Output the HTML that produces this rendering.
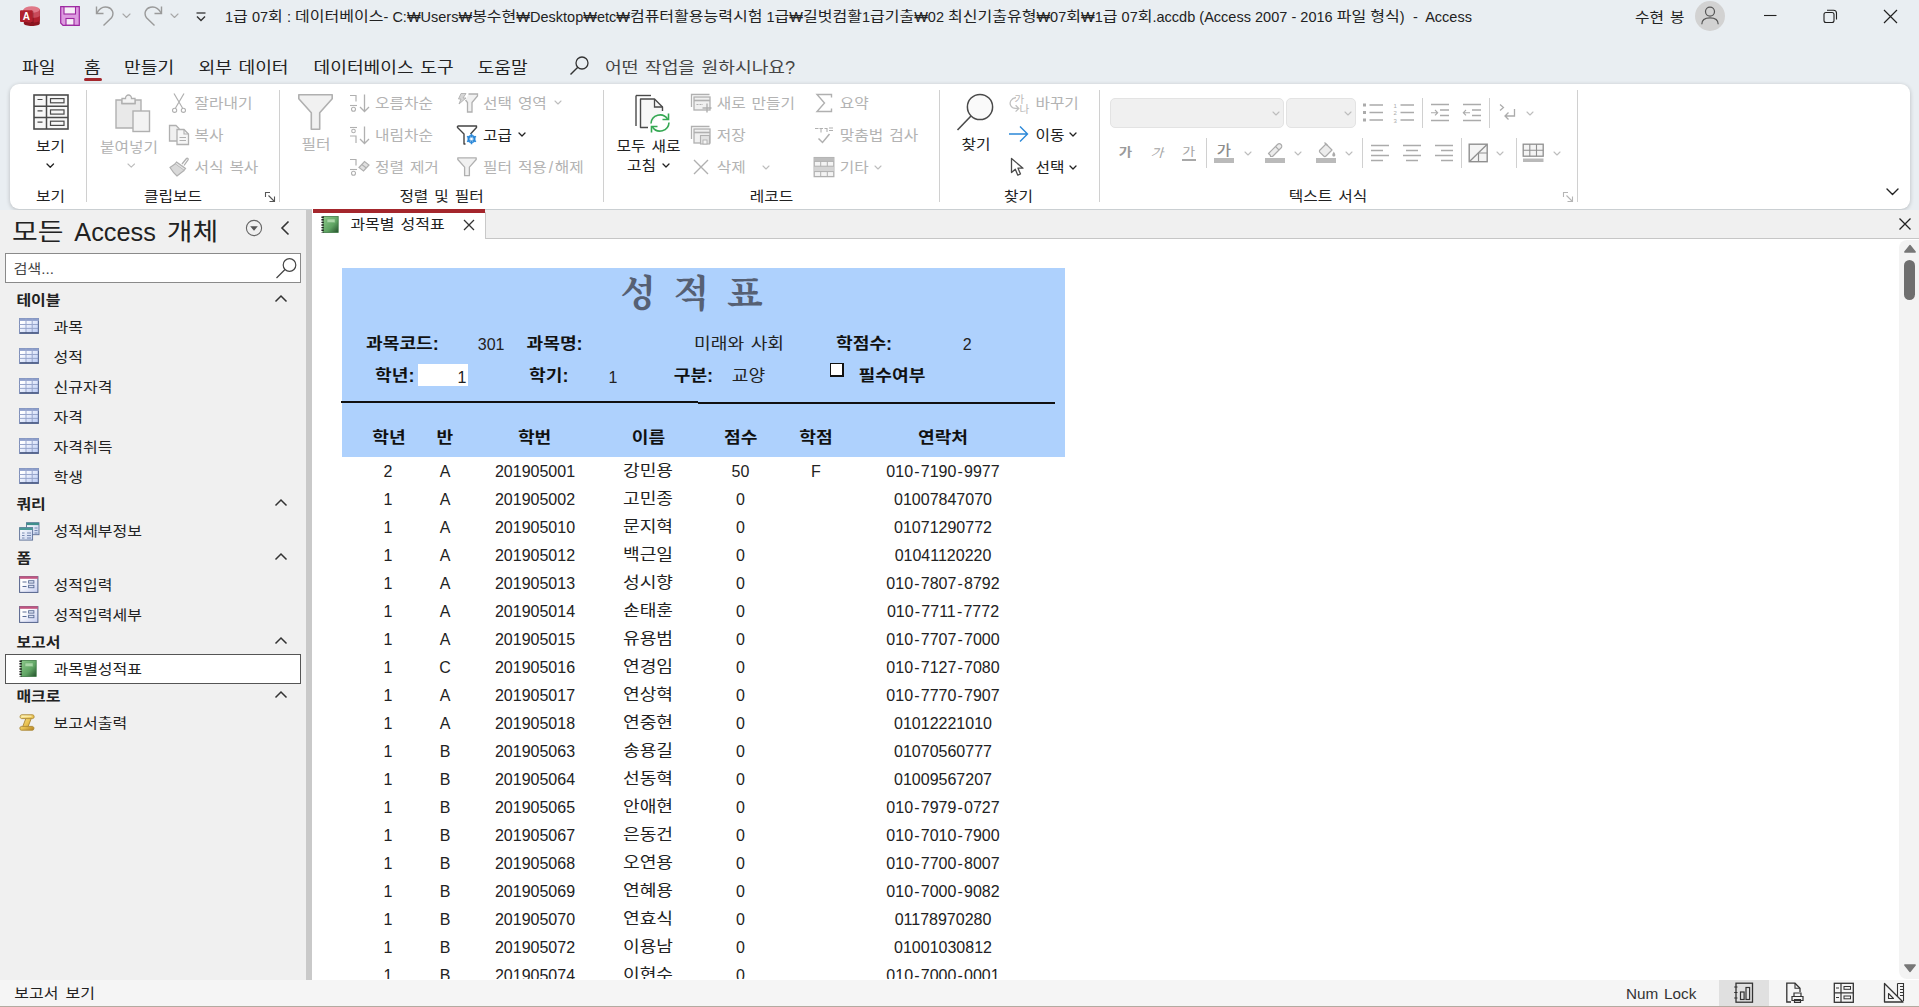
<!DOCTYPE html>
<html lang="ko"><head><meta charset="utf-8"><title>Access</title>
<style>
html,body{margin:0;padding:0}
body{width:1919px;height:1007px;overflow:hidden;position:relative;background:#f0f0f0;font-family:"Liberation Sans","Noto Sans CJK KR",sans-serif;}
.t{position:absolute;white-space:nowrap;word-spacing:1.5px;}
.k{display:inline-block;transform:scaleY(.85);transform-origin:50% 50%;}
div{box-sizing:border-box}
</style></head><body>
<div style="position:absolute;left:0;top:0;width:1919px;height:210px;background:#e9eef2"></div>
<svg style="position:absolute;left:20px;top:5px;" width="21" height="22" viewBox="0 0 21 22" fill="none">
<path d="M3.8 4.5 V18.5 C3.8 19.9 7.4 21 11.8 21 C16.2 21 19.8 19.9 19.8 18.5 V4.5 Z" fill="#8c1520"/>
<path d="M3.8 4.5 V15.2 C3.8 16.6 7.4 17.6 11.8 17.6 C16.2 17.6 19.8 16.6 19.8 15.2 V4.5 Z" fill="#b0202e"/>
<path d="M3.8 4.5 V10.4 C3.8 11.8 7.4 12.8 11.8 12.8 C16.2 12.8 19.8 11.8 19.8 10.4 V4.5 Z" fill="#c94a5a"/>
<ellipse cx="11.8" cy="4.5" rx="8" ry="3.3" fill="#e07888"/>
<rect x="11" y="6.3" width="2.6" height="11.6" fill="#000" opacity="0.22"/>
<rect x="0" y="5.2" width="12.7" height="11.8" rx="1" fill="#b0202e"/>
<text x="6.3" y="14.6" font-family="Liberation Sans, sans-serif" font-weight="bold" font-size="10" fill="#fff" text-anchor="middle">A</text>
</svg>
<svg style="position:absolute;left:60px;top:6px;" width="20" height="20" viewBox="0 0 20 20" fill="none">
<path d="M0.7 0.7 H19.3 V19.3 H3 L0.7 17 Z" fill="#dd9ae0" stroke="#9c27a0" stroke-width="1.2"/>
<rect x="4" y="0.8" width="11.5" height="7.2" fill="#f6eef7" stroke="#9c27a0" stroke-width="1.1"/>
<rect x="6" y="12.5" width="8" height="6.6" fill="#f6eef7" stroke="#9c27a0" stroke-width="1.1"/>
</svg>
<svg style="position:absolute;left:94px;top:5px;" width="22" height="22" viewBox="0 0 22 22" fill="none"><path d="M2.5 1.5 V8.5 H9.5" stroke="#9a9a9a" stroke-width="1.4"/><path d="M2.8 8.2 C5 4 9 1.2 13.5 2.2 C18.5 3.3 20.5 8.5 17.5 12.8 L9.5 20.5" stroke="#9a9a9a" stroke-width="1.4"/></svg>
<svg style="position:absolute;left:122.0px;top:12.75px;" width="9" height="5.5" viewBox="0 0 9 5.5" fill="none"><path d="M1 1 L4.5 4.5 L8 1" stroke="#a8a8a8" stroke-width="1.1" stroke-linecap="round" stroke-linejoin="round"/></svg>
<svg style="position:absolute;left:142px;top:5px;" width="22" height="22" viewBox="0 0 22 22" fill="none"><path d="M19.5 1.5 V8.5 H12.5" stroke="#9a9a9a" stroke-width="1.4"/><path d="M19.2 8.2 C17 4 13 1.2 8.5 2.2 C3.5 3.3 1.5 8.5 4.5 12.8 L12.5 20.5" stroke="#9a9a9a" stroke-width="1.4"/></svg>
<svg style="position:absolute;left:170.0px;top:12.75px;" width="9" height="5.5" viewBox="0 0 9 5.5" fill="none"><path d="M1 1 L4.5 4.5 L8 1" stroke="#a8a8a8" stroke-width="1.1" stroke-linecap="round" stroke-linejoin="round"/></svg>
<svg style="position:absolute;left:195px;top:11px;" width="12" height="12" viewBox="0 0 12 12" fill="none"><path d="M1.5 2 H10.5" stroke="#333" stroke-width="1.3"/><path d="M2 5.5 L6 9.5 L10 5.5" stroke="#333" stroke-width="1.4"/></svg>
<div class="t title" style="top:4.70px;font-size:14.5px;line-height:24px;color:#222;left:225.00px;word-spacing:0.1px;">1<span class="k" style="font-size:16px">급</span> 07<span class="k" style="font-size:16px">회</span> : <span class="k" style="font-size:16px">데이터베이스</span>- C:₩Users₩<span class="k" style="font-size:16px">봉수현</span>₩Desktop₩etc₩<span class="k" style="font-size:16px">컴퓨터활용능력시험</span> 1<span class="k" style="font-size:16px">급</span>₩<span class="k" style="font-size:16px">길벗컴활</span>1<span class="k" style="font-size:16px">급기출</span>₩02 <span class="k" style="font-size:16px">최신기출유형</span>₩07<span class="k" style="font-size:16px">회</span>₩1<span class="k" style="font-size:16px">급</span> 07<span class="k" style="font-size:16px">회</span>.accdb (Access 2007 - 2016 <span class="k" style="font-size:16px">파일</span> <span class="k" style="font-size:16px">형식</span>)&nbsp; -&nbsp; Access</div>
<div class="t " style="top:5.70px;font-size:15.75px;line-height:24px;color:#222;left:1635.00px;"><span class="k">수현</span> <span class="k">봉</span></div>
<svg style="position:absolute;left:1695px;top:1px;" width="30" height="30" viewBox="0 0 30 30" fill="none"><circle cx="15" cy="15" r="15" fill="#d2d2d2"/><circle cx="15" cy="10.6" r="4.5" stroke="#555" stroke-width="1.2"/><path d="M6.8 23.3 C6.8 19 10 16.8 15 16.8 C20 16.8 23.2 19 23.2 23.3" stroke="#555" stroke-width="1.2"/></svg>
<svg style="position:absolute;left:1763px;top:10px;" width="14" height="12" viewBox="0 0 14 12" fill="none"><path d="M1 5.5 H13.5" stroke="#222" stroke-width="1.1"/></svg>
<svg style="position:absolute;left:1823px;top:9px;" width="15" height="15" viewBox="0 0 15 15" fill="none"><rect x="1" y="3.5" width="10" height="10" rx="2" stroke="#222" stroke-width="1.1"/><path d="M4 1.3 H10.5 C12.3 1.3 13.5 2.5 13.5 4.3 V10.5" stroke="#222" stroke-width="1.1"/></svg>
<svg style="position:absolute;left:1883px;top:9px;" width="15" height="15" viewBox="0 0 15 15" fill="none"><path d="M1 1 L14 14 M14 1 L1 14" stroke="#222" stroke-width="1.2"/></svg>
<div class="t " style="top:56.20px;font-size:18.15px;line-height:24px;color:#222;left:22.00px;"><span class="k">파일</span></div>
<div class="t " style="top:56.20px;font-size:18.15px;line-height:24px;color:#222;left:84.00px;"><span class="k">홈</span></div>
<div style="position:absolute;left:84px;top:78px;width:18px;height:3px;border-radius:2px;background:#a4262c"></div>
<div class="t " style="top:56.20px;font-size:18.15px;line-height:24px;color:#222;left:124.00px;"><span class="k">만들기</span></div>
<div class="t " style="top:56.20px;font-size:18.15px;line-height:24px;color:#222;left:198.50px;"><span class="k">외부</span> <span class="k">데이터</span></div>
<div class="t " style="top:56.20px;font-size:18.15px;line-height:24px;color:#222;left:313.50px;"><span class="k">데이터베이스</span> <span class="k">도구</span></div>
<div class="t " style="top:56.20px;font-size:18.15px;line-height:24px;color:#222;left:477.50px;"><span class="k">도움말</span></div>
<svg style="position:absolute;left:569px;top:55px;" width="22" height="22" viewBox="0 0 22 22" fill="none"><circle cx="13" cy="8" r="6" stroke="#333" stroke-width="1.3"/><path d="M8.8 12.2 L1.5 19.5" stroke="#333" stroke-width="1.4"/></svg>
<div class="t " style="top:56.20px;font-size:18.15px;line-height:24px;color:#444;left:605.00px;"><span class="k">어떤</span> <span class="k">작업을</span> <span class="k">원하시나요</span>?</div>
<div style="position:absolute;left:10px;top:83.6px;width:1900px;height:125.2px;background:#fff;border-radius:9px;box-shadow:0 1px 4px rgba(0,0,0,.22)"></div>
<svg style="position:absolute;left:33px;top:94px;" width="36" height="36" viewBox="0 0 36 36" fill="none">
<rect x="1" y="1" width="34" height="34" fill="#f7f7f7" stroke="#4a4a4a" stroke-width="1.6"/>
<path d="M1 12.3 H35 M1 23.6 H35 M13.5 1 V35" stroke="#4a4a4a" stroke-width="1.5"/>
<path d="M4.5 5.5 H9.5 M4.5 16.8 H9.5 M4.5 28.1 H9.5" stroke="#4a4a4a" stroke-width="1.2"/>
<rect x="17.5" y="4.6" width="13.5" height="4.2" stroke="#4a4a4a" stroke-width="1.2"/>
<rect x="17.5" y="15.9" width="13.5" height="4.2" stroke="#4a4a4a" stroke-width="1.2"/>
<rect x="17.5" y="27.2" width="13.5" height="4.2" stroke="#4a4a4a" stroke-width="1.2"/>
</svg>
<div class="t " style="top:135.20px;font-size:15.75px;line-height:24px;color:#222;left:-249.50px;width:600px;text-align:center;"><span class="k">보기</span></div>
<svg style="position:absolute;left:46.25px;top:162.9px;" width="8.5" height="5.2" viewBox="0 0 8.5 5.2" fill="none"><path d="M1 1 L4.25 4.2 L7.5 1" stroke="#222" stroke-width="1.3" stroke-linecap="round" stroke-linejoin="round"/></svg>
<div class="t " style="top:185.20px;font-size:15.75px;line-height:24px;color:#222;left:-249.50px;width:600px;text-align:center;"><span class="k">보기</span></div>
<div style="position:absolute;left:86px;top:90px;width:1px;height:112px;background:#d0d0d0"></div>
<svg style="position:absolute;left:114px;top:93px;" width="37" height="40" viewBox="0 0 37 40" fill="none">
<path d="M2 7 H8 V10.5 H21 V7 H27 V35 H2 Z" fill="#e9e9e9" stroke="#b0b0b0" stroke-width="1.4"/>
<path d="M8 7 V5.5 H11.5 C11.5 3.5 13 2 14.5 2 C16 2 17.5 3.5 17.5 5.5 H21 V10.5 H8 Z" fill="#f4f4f4" stroke="#b0b0b0" stroke-width="1.3"/>
<rect x="19" y="18" width="16.5" height="20.5" fill="#f3f3f3" stroke="#b0b0b0" stroke-width="1.4"/>
</svg>
<div class="t " style="top:135.70px;font-size:15.75px;line-height:24px;color:#b3b3b3;left:-171.00px;width:600px;text-align:center;"><span class="k">붙여넣기</span></div>
<svg style="position:absolute;left:126.75px;top:162.9px;" width="8.5" height="5.2" viewBox="0 0 8.5 5.2" fill="none"><path d="M1 1 L4.25 4.2 L7.5 1" stroke="#bdbdbd" stroke-width="1.1" stroke-linecap="round" stroke-linejoin="round"/></svg>
<svg style="position:absolute;left:171px;top:92px;" width="16" height="22" viewBox="0 0 16 22" fill="none"><path d="M3 1.5 L11.5 16 M13 1.5 L4.5 16" stroke="#b0b0b0" stroke-width="1.2"/><circle cx="3.6" cy="18.3" r="2.1" stroke="#b0b0b0" stroke-width="1.1"/><circle cx="12.4" cy="18.3" r="2.1" stroke="#b0b0b0" stroke-width="1.1"/></svg>
<div class="t " style="top:92.20px;font-size:15.75px;line-height:24px;color:#b3b3b3;left:194.50px;"><span class="k">잘라내기</span></div>
<svg style="position:absolute;left:168px;top:124px;" width="22" height="22" viewBox="0 0 22 22" fill="none"><path d="M1.5 1.5 H8 L11 4.5 V17 H1.5 Z" fill="#f0f0f0" stroke="#b0b0b0" stroke-width="1.3"/><path d="M9 5.5 H16 L20.5 10 V20.5 H9 Z" fill="#f6f6f6" stroke="#b0b0b0" stroke-width="1.3"/><path d="M16 5.5 V10 H20.5" stroke="#b0b0b0" stroke-width="1.1"/><path d="M11.5 13.5 H18 M11.5 16.5 H18" stroke="#b0b0b0" stroke-width="1.1"/></svg>
<div class="t " style="top:124.20px;font-size:15.75px;line-height:24px;color:#b3b3b3;left:194.50px;"><span class="k">복사</span></div>
<svg style="position:absolute;left:168px;top:156px;" width="22" height="22" viewBox="0 0 22 22" fill="none"><path d="M14 8 L18.5 2.5 C19.3 1.6 20.8 2.8 20 3.8 L16 9.5" stroke="#b0b0b0" stroke-width="1.3"/><path d="M8.5 6 L17.5 12.5 L16 14.5 L7 8 Z" fill="#e4e4e4" stroke="#b0b0b0" stroke-width="1.2"/><path d="M7 8 L2 11.5 C4.5 15.5 6.5 18 9 20 L16 14.5" fill="#d9d9d9" stroke="#b0b0b0" stroke-width="1.2"/></svg>
<div class="t " style="top:156.20px;font-size:15.75px;line-height:24px;color:#b3b3b3;left:194.50px;"><span class="k">서식</span> <span class="k">복사</span></div>
<div class="t " style="top:185.20px;font-size:15.75px;line-height:24px;color:#222;left:-127.00px;width:600px;text-align:center;"><span class="k">클립보드</span></div>
<svg style="position:absolute;left:264px;top:191px;" width="12" height="12" viewBox="0 0 12 12" fill="none"><path d="M1.5 6 V1.5 H6" stroke="#555" stroke-width="1.1"/><path d="M4.5 4.5 L10.5 10.5 M10.5 5.5 V10.5 H5.5" stroke="#555" stroke-width="1.1"/></svg>
<div style="position:absolute;left:279px;top:90px;width:1px;height:112px;background:#d0d0d0"></div>
<svg style="position:absolute;left:297px;top:93px;" width="37" height="38" viewBox="0 0 37 38" fill="none"><path d="M1.8 1.8 H35.2 V5.68 L22.7 19.72 V36.2 H14.3 V19.72 L1.8 5.68 Z" fill="#f1f1f1" stroke="#b0b0b0" stroke-width="1.6" stroke-linejoin="round"/></svg>
<div class="t " style="top:133.20px;font-size:15.75px;line-height:24px;color:#b3b3b3;left:16.00px;width:600px;text-align:center;"><span class="k">필터</span></div>
<svg style="position:absolute;left:348px;top:93px;" width="23" height="20" viewBox="0 0 23 20" fill="none"><path d="M16.5 1.5 V18.5 M12 14 L16.5 18.5 L21 14" stroke="#b0b0b0" stroke-width="1.3"/><path d="M2 2.5 H8 V8.5" stroke="#b0b0b0" stroke-width="1.2"/><path d="M2 12.5 H9" stroke="#b0b0b0" stroke-width="1.1"/><circle cx="5.5" cy="16.2" r="2" stroke="#b0b0b0" stroke-width="1.1"/></svg>
<div class="t " style="top:91.70px;font-size:15.75px;line-height:24px;color:#b3b3b3;left:375.00px;"><span class="k">오름차순</span></div>
<svg style="position:absolute;left:348px;top:125px;" width="23" height="20" viewBox="0 0 23 20" fill="none"><path d="M16.5 1.5 V18.5 M12 14 L16.5 18.5 L21 14" stroke="#b0b0b0" stroke-width="1.3"/><path d="M2 2.5 H9" stroke="#b0b0b0" stroke-width="1.1"/><circle cx="5.5" cy="6" r="1.8" stroke="#b0b0b0" stroke-width="1.1"/><path d="M2 11 H8 V18" stroke="#b0b0b0" stroke-width="1.2"/></svg>
<div class="t " style="top:123.90px;font-size:15.75px;line-height:24px;color:#b3b3b3;left:375.00px;"><span class="k">내림차순</span></div>
<svg style="position:absolute;left:348px;top:157px;" width="23" height="20" viewBox="0 0 23 20" fill="none"><path d="M2 2.5 H8 V8.5" stroke="#b0b0b0" stroke-width="1.2"/><path d="M2 12.5 H9" stroke="#b0b0b0" stroke-width="1.1"/><circle cx="5.5" cy="16.2" r="2" stroke="#b0b0b0" stroke-width="1.1"/><path d="M11 10.5 L16.5 4.5 L21 8 L15.5 14 Z" fill="#e0e0e0" stroke="#b0b0b0" stroke-width="1.2"/><path d="M13.8 7.5 L18.3 11" stroke="#b0b0b0" stroke-width="1.1"/></svg>
<div class="t " style="top:156.20px;font-size:15.75px;line-height:24px;color:#b3b3b3;left:375.00px;"><span class="k">정렬</span> <span class="k">제거</span></div>
<svg style="position:absolute;left:456px;top:92px;" width="23" height="22" viewBox="0 0 23 22" fill="none"><path d="M5 1.5 H10 L7 6 H10 L3 12 L5 7 H2.5 Z" fill="#d5d5d5" stroke="#b0b0b0" stroke-width="0.9"/><path d="M12.5 2 H21.5 V4 L16 10.5 V20 H11.5 V10.5 L9.5 8" fill="#f1f1f1" stroke="#b0b0b0" stroke-width="1.3"/></svg>
<div class="t " style="top:91.70px;font-size:15.75px;line-height:24px;color:#b3b3b3;left:483.00px;"><span class="k">선택</span> <span class="k">영역</span></div>
<svg style="position:absolute;left:553.5px;top:100.0px;" width="8" height="5" viewBox="0 0 8 5" fill="none"><path d="M1 1 L4.0 4 L7 1" stroke="#bdbdbd" stroke-width="1.1" stroke-linecap="round" stroke-linejoin="round"/></svg>
<svg style="position:absolute;left:456px;top:124px;" width="24" height="22" viewBox="0 0 24 22" fill="none"><path d="M1.5 2 H20.5 V3.5 L14.5 10 M9.5 20 H8 V10 L1.5 3.5 V2" stroke="#444" stroke-width="1.4" stroke-linejoin="round"/><g transform="translate(15.5,15)"><circle r="3.3" stroke="#2b88d8" stroke-width="1.5"/><path d="M0 -5.2 V5.2 M-4.5 -2.6 L4.5 2.6 M-4.5 2.6 L4.5 -2.6" stroke="#2b88d8" stroke-width="1.6"/><circle r="1.4" fill="#fff"/></g></svg>
<div class="t " style="top:123.90px;font-size:15.75px;line-height:24px;color:#222;left:483.00px;"><span class="k">고급</span></div>
<svg style="position:absolute;left:517.6px;top:132.2px;" width="8" height="5" viewBox="0 0 8 5" fill="none"><path d="M1 1 L4.0 4 L7 1" stroke="#222" stroke-width="1.3" stroke-linecap="round" stroke-linejoin="round"/></svg>
<svg style="position:absolute;left:456px;top:156px;" width="23" height="22" viewBox="0 0 23 22" fill="none"><path d="M1.8 1.8 H20.2 V3.535 L13.4 11.14 V19.7 H8.6 V11.14 L1.8 3.535 Z" fill="#f1f1f1" stroke="#b0b0b0" stroke-width="1.3" stroke-linejoin="round"/></svg>
<div class="t " style="top:156.20px;font-size:15.75px;line-height:24px;color:#b3b3b3;left:483.00px;"><span class="k">필터</span> <span class="k">적용</span><span style="margin:0 1.6px 0 1.8px">/</span><span class="k">해제</span></div>
<div class="t " style="top:185.20px;font-size:15.75px;line-height:24px;color:#222;left:141.50px;width:600px;text-align:center;"><span class="k">정렬</span> <span class="k">및</span> <span class="k">필터</span></div>
<div style="position:absolute;left:603px;top:90px;width:1px;height:112px;background:#d0d0d0"></div>
<svg style="position:absolute;left:634px;top:93.5px;" width="38" height="40" viewBox="0 0 38 40" fill="none">
<path d="M2 1.5 H17" stroke="#4a4a4a" stroke-width="1.4"/><path d="M2 1.5 V32" stroke="#4a4a4a" stroke-width="1.4"/>
<path d="M14 33.5 H6.5 V5 H20.5 L28.5 13 V17" fill="#f7f7f7" stroke="#4a4a4a" stroke-width="1.4" stroke-linejoin="round"/>
<path d="M20.5 5 V13 H28.5" stroke="#4a4a4a" stroke-width="1.3"/>
<path d="M17 29.5 A9 9 0 0 1 33.5 25" stroke="#35a853" stroke-width="1.6"/><path d="M34.5 19.5 V25.5 H28.5" stroke="#35a853" stroke-width="1.6"/>
<path d="M35 28.5 A9 9 0 0 1 18.5 33" stroke="#35a853" stroke-width="1.6"/><path d="M17.5 38.5 V32.5 H23.5" stroke="#35a853" stroke-width="1.6"/>
</svg>
<div class="t " style="top:135.20px;font-size:15.75px;line-height:24px;color:#222;left:348.50px;width:600px;text-align:center;"><span class="k">모두</span> <span class="k">새로</span></div>
<div class="t " style="top:154.20px;font-size:15.75px;line-height:24px;color:#222;left:627.00px;"><span class="k">고침</span></div>
<svg style="position:absolute;left:661.5px;top:163.0px;" width="8" height="5" viewBox="0 0 8 5" fill="none"><path d="M1 1 L4.0 4 L7 1" stroke="#222" stroke-width="1.3" stroke-linecap="round" stroke-linejoin="round"/></svg>
<svg style="position:absolute;left:690px;top:93px;" width="23" height="21" viewBox="0 0 23 21" fill="none"><path d="M1.5 14 V1.5 H19.5" stroke="#b0b0b0" stroke-width="1.3"/><rect x="4" y="4" width="16" height="13" fill="#f0f0f0" stroke="#b0b0b0" stroke-width="1.3"/><path d="M4 7.5 H20" stroke="#b0b0b0" stroke-width="1.6"/><path d="M6.5 11.5 H13" stroke="#b0b0b0" stroke-width="1.1" stroke-dasharray="2 1"/><path d="M17 10.5 V19.5 M12.5 15 H21.5" stroke="#b0b0b0" stroke-width="1.4"/></svg>
<div class="t " style="top:92.20px;font-size:15.75px;line-height:24px;color:#b3b3b3;left:716.70px;"><span class="k">새로</span> <span class="k">만들기</span></div>
<svg style="position:absolute;left:690px;top:125px;" width="23" height="21" viewBox="0 0 23 21" fill="none"><path d="M1.5 14 V1.5 H19.5" stroke="#b0b0b0" stroke-width="1.3"/><rect x="4" y="4" width="16" height="14" fill="#f0f0f0" stroke="#b0b0b0" stroke-width="1.3"/><path d="M4 7.5 H20" stroke="#b0b0b0" stroke-width="1.6"/><rect x="10.5" y="10.5" width="9" height="8.5" fill="#e2e2e2" stroke="#b0b0b0" stroke-width="1.1"/><rect x="13" y="15" width="4" height="4" fill="#f6f6f6" stroke="#b0b0b0" stroke-width="0.9"/></svg>
<div class="t " style="top:124.20px;font-size:15.75px;line-height:24px;color:#b3b3b3;left:716.70px;"><span class="k">저장</span></div>
<svg style="position:absolute;left:692px;top:158px;" width="18" height="18" viewBox="0 0 18 18" fill="none"><path d="M2 2 L16 16 M16 2 L2 16" stroke="#b0b0b0" stroke-width="1.4"/></svg>
<div class="t " style="top:156.20px;font-size:15.75px;line-height:24px;color:#b3b3b3;left:716.70px;"><span class="k">삭제</span></div>
<svg style="position:absolute;left:761.5px;top:165.0px;" width="8" height="5" viewBox="0 0 8 5" fill="none"><path d="M1 1 L4.0 4 L7 1" stroke="#bdbdbd" stroke-width="1.1" stroke-linecap="round" stroke-linejoin="round"/></svg>
<svg style="position:absolute;left:815px;top:93px;" width="19" height="20" viewBox="0 0 19 20" fill="none"><path d="M16.5 4.5 V1.5 H2 L9.5 10 L2 18.5 H16.5 V15.5" stroke="#b0b0b0" stroke-width="1.4" stroke-linejoin="miter"/></svg>
<div class="t " style="top:92.20px;font-size:15.75px;line-height:24px;color:#b3b3b3;left:839.80px;"><span class="k">요약</span></div>
<svg style="position:absolute;left:814px;top:126px;" width="21" height="20" viewBox="0 0 21 20" fill="none"><path d="M1 2.5 H4.5 M5.5 2.5 H9 M7 2.5 V6.5 M10.5 2.5 H13 V6 M15 2 H19 M15 4.5 H19" stroke="#b0b0b0" stroke-width="1.1"/><path d="M4.5 12.5 L8.5 16.5 L15.5 8" stroke="#b0b0b0" stroke-width="1.5"/></svg>
<div class="t " style="top:124.20px;font-size:15.75px;line-height:24px;color:#b3b3b3;left:839.80px;"><span class="k">맞춤법</span> <span class="k">검사</span></div>
<svg style="position:absolute;left:813px;top:156px;" width="22" height="22" viewBox="0 0 22 22" fill="none"><rect x="1.2" y="1.6" width="19.6" height="19" fill="#f4f4f4" stroke="#b0b0b0" stroke-width="1.3"/><rect x="1.2" y="1.6" width="19.6" height="3.6" fill="#bdbdbd"/><rect x="1.2" y="10.2" width="19.6" height="5.4" fill="#d4d4d4"/><path d="M1.2 5.4 H20.8 M1.2 10.2 H20.8 M1.2 15.6 H20.8 M7.7 5.4 V10.2 M14.3 5.4 V10.2 M7.7 15.6 V20.6 M14.3 15.6 V20.6" stroke="#b0b0b0" stroke-width="1"/></svg>
<div class="t " style="top:156.20px;font-size:15.75px;line-height:24px;color:#b3b3b3;left:839.80px;"><span class="k">기타</span></div>
<svg style="position:absolute;left:874.0px;top:165.0px;" width="8" height="5" viewBox="0 0 8 5" fill="none"><path d="M1 1 L4.0 4 L7 1" stroke="#bdbdbd" stroke-width="1.1" stroke-linecap="round" stroke-linejoin="round"/></svg>
<div class="t " style="top:185.20px;font-size:15.75px;line-height:24px;color:#222;left:471.50px;width:600px;text-align:center;"><span class="k">레코드</span></div>
<div style="position:absolute;left:939px;top:90px;width:1px;height:112px;background:#d0d0d0"></div>
<svg style="position:absolute;left:955px;top:93px;" width="40" height="40" viewBox="0 0 40 40" fill="none"><circle cx="25" cy="14" r="12.6" fill="#fafafa" stroke="#4a4a4a" stroke-width="1.5"/><path d="M16 23 L2.5 37" stroke="#4a4a4a" stroke-width="1.6"/></svg>
<div class="t " style="top:133.20px;font-size:15.75px;line-height:24px;color:#222;left:676.00px;width:600px;text-align:center;"><span class="k">찾기</span></div>
<svg style="position:absolute;left:1008px;top:92px;" width="22" height="22" viewBox="0 0 22 22" fill="none"><path d="M8 5.5 C3 6.5 1 10.5 2.8 13.8 C3.8 15.6 5.4 16.4 7.4 16.4 H10.5 M7.6 13.2 L10.8 16.4 L7.6 19.6" stroke="#c0c0c0" stroke-width="1.3"/></svg>
<div class="t" style="left:1014.6px;top:92.6px;font-size:10.5px;line-height:12px;color:#b8b8b8">가</div><div class="t" style="left:1019.6px;top:102.8px;font-size:10.5px;line-height:12px;color:#b8b8b8">나</div>
<div class="t " style="top:92.20px;font-size:15.75px;line-height:24px;color:#b3b3b3;left:1035.40px;"><span class="k">바꾸기</span></div>
<svg style="position:absolute;left:1008px;top:125.3px;" width="22" height="18" viewBox="0 0 22 18" fill="none"><path d="M1 9 H19.5 M12 1.5 L19.5 9 L12 16.5" stroke="#2b88d8" stroke-width="1.4"/></svg>
<div class="t " style="top:123.90px;font-size:15.75px;line-height:24px;color:#222;left:1035.40px;"><span class="k">이동</span></div>
<svg style="position:absolute;left:1069.0px;top:132.2px;" width="8" height="5" viewBox="0 0 8 5" fill="none"><path d="M1 1 L4.0 4 L7 1" stroke="#222" stroke-width="1.3" stroke-linecap="round" stroke-linejoin="round"/></svg>
<svg style="position:absolute;left:1009px;top:157px;" width="18" height="21" viewBox="0 0 18 21" fill="none"><path d="M2.5 1.5 V15.5 L6.3 12.2 L8.8 18.2 L11.5 17 L9 11.2 H14 Z" fill="#fff" stroke="#4a4a4a" stroke-width="1.3" stroke-linejoin="round"/></svg>
<div class="t " style="top:156.20px;font-size:15.75px;line-height:24px;color:#222;left:1035.40px;"><span class="k">선택</span></div>
<svg style="position:absolute;left:1069.0px;top:165.0px;" width="8" height="5" viewBox="0 0 8 5" fill="none"><path d="M1 1 L4.0 4 L7 1" stroke="#222" stroke-width="1.3" stroke-linecap="round" stroke-linejoin="round"/></svg>
<div class="t " style="top:185.20px;font-size:15.75px;line-height:24px;color:#222;left:718.50px;width:600px;text-align:center;"><span class="k">찾기</span></div>
<div style="position:absolute;left:1099px;top:90px;width:1px;height:112px;background:#d0d0d0"></div>
<div style="position:absolute;left:1110px;top:98px;width:174px;height:30px;background:#f0f0f0;border:1px solid #e3e3e3;border-radius:5px"></div>
<svg style="position:absolute;left:1272.0px;top:111.0px;" width="8" height="5" viewBox="0 0 8 5" fill="none"><path d="M1 1 L4.0 4 L7 1" stroke="#bdbdbd" stroke-width="1.1" stroke-linecap="round" stroke-linejoin="round"/></svg>
<div style="position:absolute;left:1286px;top:98px;width:70px;height:30px;background:#f0f0f0;border:1px solid #e3e3e3;border-radius:5px"></div>
<svg style="position:absolute;left:1344.0px;top:111.0px;" width="8" height="5" viewBox="0 0 8 5" fill="none"><path d="M1 1 L4.0 4 L7 1" stroke="#bdbdbd" stroke-width="1.1" stroke-linecap="round" stroke-linejoin="round"/></svg>
<svg style="position:absolute;left:1362px;top:102px;" width="22" height="21" viewBox="0 0 22 21" fill="none"><rect x="1" y="1.5" width="3" height="3" fill="#ababab"/><rect x="1" y="9" width="3" height="3" fill="#ababab"/><rect x="1" y="16.5" width="3" height="3" fill="#ababab"/><path d="M7.5 3 H21 M7.5 10.5 H21 M7.5 18 H21" stroke="#ababab" stroke-width="1.3"/></svg>
<svg style="position:absolute;left:1393px;top:102px;" width="22" height="21" viewBox="0 0 22 21" fill="none"><path d="M7.5 3 H21 M7.5 10.5 H21 M7.5 18 H21" stroke="#ababab" stroke-width="1.3"/><text x="0.5" y="5.5" font-size="6" fill="#ababab" font-family="Liberation Sans,sans-serif">1</text><text x="0.5" y="13" font-size="6" fill="#ababab" font-family="Liberation Sans,sans-serif">2</text><text x="0.5" y="20.5" font-size="6" fill="#ababab" font-family="Liberation Sans,sans-serif">3</text></svg>
<div style="position:absolute;left:1422px;top:98px;width:1px;height:30px;background:#d0d0d0"></div>
<svg style="position:absolute;left:1430px;top:103px;" width="20" height="19" viewBox="0 0 20 19" fill="none"><path d="M1 1.5 H19 M10 7 H19 M10 12.5 H19 M1 17.5 H19" stroke="#ababab" stroke-width="1.3"/><path d="M1 9.7 H7.5 M5 7 L7.7 9.7 L5 12.4" stroke="#ababab" stroke-width="1.1"/></svg>
<svg style="position:absolute;left:1462px;top:103px;" width="20" height="19" viewBox="0 0 20 19" fill="none"><path d="M1 1.5 H19 M10 7 H19 M10 12.5 H19 M1 17.5 H19" stroke="#ababab" stroke-width="1.3"/><path d="M1.5 9.7 H8 M4 7 L1.3 9.7 L4 12.4" stroke="#ababab" stroke-width="1.1"/></svg>
<div style="position:absolute;left:1489px;top:98px;width:1px;height:30px;background:#d0d0d0"></div>
<svg style="position:absolute;left:1498px;top:103px;" width="19" height="18" viewBox="0 0 19 18" fill="none"><path d="M2 1.5 L5.5 4.5 L2 7.5" stroke="#ababab" stroke-width="1.2"/><path d="M16.5 6 V13 H7 M10.5 9.5 L7 13 L10.5 16.5" stroke="#ababab" stroke-width="1.3"/></svg>
<svg style="position:absolute;left:1525.7px;top:111.0px;" width="8" height="5" viewBox="0 0 8 5" fill="none"><path d="M1 1 L4.0 4 L7 1" stroke="#bdbdbd" stroke-width="1.1" stroke-linecap="round" stroke-linejoin="round"/></svg>
<div class="t " style="top:140.70px;font-size:14.5px;line-height:24px;color:#9a9a9a;font-weight:bold;left:825.50px;width:600px;text-align:center;"><span class="k">가</span></div>
<div class="t " style="top:140.70px;font-size:14px;line-height:24px;color:#a5a5a5;left:857.00px;width:600px;text-align:center;font-style:italic;"><span class="k">가</span></div>
<div class="t " style="top:140.00px;font-size:14px;line-height:24px;color:#a5a5a5;left:888.70px;width:600px;text-align:center;"><span class="k">가</span></div>
<div style="position:absolute;left:1182.3px;top:159.4px;width:13.4px;height:1.5px;background:#a8a8a8"></div>
<div style="position:absolute;left:1206px;top:138px;width:1px;height:30px;background:#d0d0d0"></div>
<div class="t " style="top:138.50px;font-size:15.5px;line-height:24px;color:#8c8c8c;left:924.00px;width:600px;text-align:center;font-weight:500;"><span class="k">가</span></div>
<div style="position:absolute;left:1214px;top:158px;width:20px;height:4.7px;background:#bababa"></div>
<svg style="position:absolute;left:1243.7px;top:151.0px;" width="8" height="5" viewBox="0 0 8 5" fill="none"><path d="M1 1 L4.0 4 L7 1" stroke="#bdbdbd" stroke-width="1.1" stroke-linecap="round" stroke-linejoin="round"/></svg>
<svg style="position:absolute;left:1264px;top:142px;" width="22" height="16" viewBox="0 0 22 16" fill="none"><path d="M6.5 13.5 L4.5 11.5 L13.5 2.5 C14.5 1.5 16 1.5 17 2.5 C18 3.5 18 5 17 6 L8.5 14.5 H6.5 Z" fill="#ececec" stroke="#ababab" stroke-width="1.2" stroke-linejoin="round"/><path d="M11.5 4.5 L15 8" stroke="#ababab" stroke-width="1.1"/></svg>
<div style="position:absolute;left:1265px;top:158px;width:20px;height:4.7px;background:#bababa"></div>
<svg style="position:absolute;left:1294.0px;top:151.0px;" width="8" height="5" viewBox="0 0 8 5" fill="none"><path d="M1 1 L4.0 4 L7 1" stroke="#bdbdbd" stroke-width="1.1" stroke-linecap="round" stroke-linejoin="round"/></svg>
<svg style="position:absolute;left:1315px;top:141px;" width="22" height="17" viewBox="0 0 22 17" fill="none"><path d="M4.5 9.5 L11 3 L17 9 L11 15 C10.3 15.7 9.4 15.7 8.7 15 L4.5 10.8 Z" fill="#ececec" stroke="#ababab" stroke-width="1.2" stroke-linejoin="round"/><path d="M9.5 1.5 L12.5 4.5" stroke="#ababab" stroke-width="1.2"/><path d="M18.8 10.5 C19.8 12.3 20.3 13.2 20.3 14 C20.3 15 19.6 15.6 18.8 15.6 C18 15.6 17.3 15 17.3 14 C17.3 13.2 17.8 12.3 18.8 10.5Z" fill="#ababab"/></svg>
<div style="position:absolute;left:1316px;top:158px;width:20px;height:4.7px;background:#bababa"></div>
<svg style="position:absolute;left:1345.0px;top:151.0px;" width="8" height="5" viewBox="0 0 8 5" fill="none"><path d="M1 1 L4.0 4 L7 1" stroke="#bdbdbd" stroke-width="1.1" stroke-linecap="round" stroke-linejoin="round"/></svg>
<div style="position:absolute;left:1362px;top:138px;width:1px;height:30px;background:#d0d0d0"></div>
<svg style="position:absolute;left:1370px;top:144px;" width="20" height="18" viewBox="0 0 20 18" fill="none"><path d="M1 1.5 H19 M1 6.5 H13 M1 11.5 H19 M1 16.5 H13" stroke="#ababab" stroke-width="1.3"/></svg>
<svg style="position:absolute;left:1402px;top:144px;" width="20" height="18" viewBox="0 0 20 18" fill="none"><path d="M1 1.5 H19 M4 6.5 H16 M1 11.5 H19 M4 16.5 H16" stroke="#ababab" stroke-width="1.3"/></svg>
<svg style="position:absolute;left:1434px;top:144px;" width="20" height="18" viewBox="0 0 20 18" fill="none"><path d="M1 1.5 H19 M7 6.5 H19 M1 11.5 H19 M7 16.5 H19" stroke="#ababab" stroke-width="1.3"/></svg>
<div style="position:absolute;left:1461px;top:138px;width:1px;height:30px;background:#d0d0d0"></div>
<svg style="position:absolute;left:1468px;top:143px;" width="21" height="20" viewBox="0 0 21 20" fill="none"><rect x="1.2" y="1.2" width="18" height="17.5" fill="#f4f4f4" stroke="#8f8f8f" stroke-width="1.4"/><path d="M1.5 18.5 L19 1.5" stroke="#8f8f8f" stroke-width="1.3"/><path d="M10.5 18.5 V10 H19" stroke="#8f8f8f" stroke-width="1.2"/></svg>
<svg style="position:absolute;left:1496.0px;top:151.0px;" width="8" height="5" viewBox="0 0 8 5" fill="none"><path d="M1 1 L4.0 4 L7 1" stroke="#bdbdbd" stroke-width="1.1" stroke-linecap="round" stroke-linejoin="round"/></svg>
<div style="position:absolute;left:1516px;top:138px;width:1px;height:30px;background:#d0d0d0"></div>
<svg style="position:absolute;left:1522px;top:143px;" width="23" height="21" viewBox="0 0 23 21" fill="none"><rect x="1.2" y="1.2" width="20" height="12" fill="#f4f4f4" stroke="#8f8f8f" stroke-width="1.3"/><path d="M1.2 7.2 H21.2 M7.8 1.2 V13.2 M14.5 1.2 V13.2" stroke="#8f8f8f" stroke-width="1.1"/><rect x="1" y="15.5" width="20.5" height="3.5" fill="#b9b9b9"/></svg>
<svg style="position:absolute;left:1553.0px;top:151.0px;" width="8" height="5" viewBox="0 0 8 5" fill="none"><path d="M1 1 L4.0 4 L7 1" stroke="#bdbdbd" stroke-width="1.1" stroke-linecap="round" stroke-linejoin="round"/></svg>
<div class="t " style="top:185.20px;font-size:15.75px;line-height:24px;color:#222;left:1028.00px;width:600px;text-align:center;"><span class="k">텍스트</span> <span class="k">서식</span></div>
<svg style="position:absolute;left:1562px;top:191px;" width="12" height="12" viewBox="0 0 12 12" fill="none"><path d="M1.5 6 V1.5 H6" stroke="#b5b5b5" stroke-width="1.1"/><path d="M4.5 4.5 L10.5 10.5 M10.5 5.5 V10.5 H5.5" stroke="#b5b5b5" stroke-width="1.1"/></svg>
<div style="position:absolute;left:1577px;top:90px;width:1px;height:112px;background:#d0d0d0"></div>
<svg style="position:absolute;left:1885.5px;top:188.25px;" width="13" height="7.5" viewBox="0 0 13 7.5" fill="none"><path d="M1 1 L6.5 6.5 L12 1" stroke="#222" stroke-width="1.4" stroke-linecap="round" stroke-linejoin="round"/></svg>
<div style="position:absolute;left:0;top:210px;width:306px;height:769px;background:#f0f0f0"></div>
<div class="t navtitle" style="top:220.20px;font-size:28px;line-height:24px;color:#222;left:12.00px;line-height:34px;margin-top:-5px;word-spacing:3px;"><span class="k">모든</span> <span style="font-size:25.3px">Access</span> <span class="k">개체</span></div>
<svg style="position:absolute;left:245px;top:219px;" width="18" height="18" viewBox="0 0 18 18" fill="none"><circle cx="9" cy="9" r="7.6" stroke="#666" stroke-width="1.1"/><path d="M5.2 7.2 H12.8 L9 11.8 Z" fill="#555"/></svg>
<svg style="position:absolute;left:280px;top:220px;" width="10" height="16" viewBox="0 0 10 16" fill="none"><path d="M8.5 1.5 L2 8 L8.5 14.5" stroke="#333" stroke-width="1.6"/></svg>
<div style="position:absolute;left:5px;top:253px;width:296px;height:30px;background:#fff;border:1px solid #8a8a8a"></div>
<div class="t " style="top:257.20px;font-size:15.2px;line-height:24px;color:#444;left:13.40px;"><span class="k">검색</span>...</div>
<svg style="position:absolute;left:275px;top:257px;" width="23" height="22" viewBox="0 0 23 22" fill="none"><circle cx="14.5" cy="8" r="6.3" stroke="#444" stroke-width="1.2"/><path d="M10 12.5 L1.5 21" stroke="#444" stroke-width="1.3"/></svg>
<div class="t " style="top:289.00px;font-size:16px;line-height:24px;color:#222;font-weight:bold;left:16.40px;"><span class="k">테이블</span></div>
<svg style="position:absolute;left:274px;top:294.1px;" width="14" height="9" viewBox="0 0 14 9" fill="none"><path d="M1.5 7.5 L7 2 L12.5 7.5" stroke="#333" stroke-width="1.5"/></svg>
<svg style="position:absolute;left:19px;top:318.0px;" width="20" height="16" viewBox="0 0 20 16" fill="none"><defs><linearGradient id="tg72" x1="0" y1="0" x2="1" y2="1"><stop offset="0.2" stop-color="#ffffff"/><stop offset="1" stop-color="#b4c6f4"/></linearGradient></defs>
<rect x="0.5" y="0.5" width="19" height="15" fill="url(#tg72)" stroke="#8090ba"/>
<rect x="0.5" y="0.5" width="19" height="2.4" fill="#8e9fcb"/>
<path d="M7 0.5 V15 M13.2 0.5 V15 M0.5 6.5 H19.5 M0.5 10.4 H19.5" stroke="#98a6cc" stroke-width="1"/>
<path d="M1 14.9 H19.7" stroke="#46557c" stroke-width="1.5"/><path d="M19.3 3 V15" stroke="#5a6a94" stroke-width="0.9"/></svg>
<div class="t " style="top:316.10px;font-size:16px;line-height:24px;color:#222;left:53.60px;"><span class="k">과목</span></div>
<svg style="position:absolute;left:19px;top:348.0px;" width="20" height="16" viewBox="0 0 20 16" fill="none"><defs><linearGradient id="tg73" x1="0" y1="0" x2="1" y2="1"><stop offset="0.2" stop-color="#ffffff"/><stop offset="1" stop-color="#b4c6f4"/></linearGradient></defs>
<rect x="0.5" y="0.5" width="19" height="15" fill="url(#tg73)" stroke="#8090ba"/>
<rect x="0.5" y="0.5" width="19" height="2.4" fill="#8e9fcb"/>
<path d="M7 0.5 V15 M13.2 0.5 V15 M0.5 6.5 H19.5 M0.5 10.4 H19.5" stroke="#98a6cc" stroke-width="1"/>
<path d="M1 14.9 H19.7" stroke="#46557c" stroke-width="1.5"/><path d="M19.3 3 V15" stroke="#5a6a94" stroke-width="0.9"/></svg>
<div class="t " style="top:346.10px;font-size:16px;line-height:24px;color:#222;left:53.60px;"><span class="k">성적</span></div>
<svg style="position:absolute;left:19px;top:378.0px;" width="20" height="16" viewBox="0 0 20 16" fill="none"><defs><linearGradient id="tg74" x1="0" y1="0" x2="1" y2="1"><stop offset="0.2" stop-color="#ffffff"/><stop offset="1" stop-color="#b4c6f4"/></linearGradient></defs>
<rect x="0.5" y="0.5" width="19" height="15" fill="url(#tg74)" stroke="#8090ba"/>
<rect x="0.5" y="0.5" width="19" height="2.4" fill="#8e9fcb"/>
<path d="M7 0.5 V15 M13.2 0.5 V15 M0.5 6.5 H19.5 M0.5 10.4 H19.5" stroke="#98a6cc" stroke-width="1"/>
<path d="M1 14.9 H19.7" stroke="#46557c" stroke-width="1.5"/><path d="M19.3 3 V15" stroke="#5a6a94" stroke-width="0.9"/></svg>
<div class="t " style="top:376.10px;font-size:16px;line-height:24px;color:#222;left:53.60px;"><span class="k">신규자격</span></div>
<svg style="position:absolute;left:19px;top:408.0px;" width="20" height="16" viewBox="0 0 20 16" fill="none"><defs><linearGradient id="tg75" x1="0" y1="0" x2="1" y2="1"><stop offset="0.2" stop-color="#ffffff"/><stop offset="1" stop-color="#b4c6f4"/></linearGradient></defs>
<rect x="0.5" y="0.5" width="19" height="15" fill="url(#tg75)" stroke="#8090ba"/>
<rect x="0.5" y="0.5" width="19" height="2.4" fill="#8e9fcb"/>
<path d="M7 0.5 V15 M13.2 0.5 V15 M0.5 6.5 H19.5 M0.5 10.4 H19.5" stroke="#98a6cc" stroke-width="1"/>
<path d="M1 14.9 H19.7" stroke="#46557c" stroke-width="1.5"/><path d="M19.3 3 V15" stroke="#5a6a94" stroke-width="0.9"/></svg>
<div class="t " style="top:406.10px;font-size:16px;line-height:24px;color:#222;left:53.60px;"><span class="k">자격</span></div>
<svg style="position:absolute;left:19px;top:438.0px;" width="20" height="16" viewBox="0 0 20 16" fill="none"><defs><linearGradient id="tg76" x1="0" y1="0" x2="1" y2="1"><stop offset="0.2" stop-color="#ffffff"/><stop offset="1" stop-color="#b4c6f4"/></linearGradient></defs>
<rect x="0.5" y="0.5" width="19" height="15" fill="url(#tg76)" stroke="#8090ba"/>
<rect x="0.5" y="0.5" width="19" height="2.4" fill="#8e9fcb"/>
<path d="M7 0.5 V15 M13.2 0.5 V15 M0.5 6.5 H19.5 M0.5 10.4 H19.5" stroke="#98a6cc" stroke-width="1"/>
<path d="M1 14.9 H19.7" stroke="#46557c" stroke-width="1.5"/><path d="M19.3 3 V15" stroke="#5a6a94" stroke-width="0.9"/></svg>
<div class="t " style="top:436.10px;font-size:16px;line-height:24px;color:#222;left:53.60px;"><span class="k">자격취득</span></div>
<svg style="position:absolute;left:19px;top:468.0px;" width="20" height="16" viewBox="0 0 20 16" fill="none"><defs><linearGradient id="tg77" x1="0" y1="0" x2="1" y2="1"><stop offset="0.2" stop-color="#ffffff"/><stop offset="1" stop-color="#b4c6f4"/></linearGradient></defs>
<rect x="0.5" y="0.5" width="19" height="15" fill="url(#tg77)" stroke="#8090ba"/>
<rect x="0.5" y="0.5" width="19" height="2.4" fill="#8e9fcb"/>
<path d="M7 0.5 V15 M13.2 0.5 V15 M0.5 6.5 H19.5 M0.5 10.4 H19.5" stroke="#98a6cc" stroke-width="1"/>
<path d="M1 14.9 H19.7" stroke="#46557c" stroke-width="1.5"/><path d="M19.3 3 V15" stroke="#5a6a94" stroke-width="0.9"/></svg>
<div class="t " style="top:466.10px;font-size:16px;line-height:24px;color:#222;left:53.60px;"><span class="k">학생</span></div>
<div class="t " style="top:492.70px;font-size:16px;line-height:24px;color:#222;font-weight:bold;left:16.40px;"><span class="k">쿼리</span></div>
<svg style="position:absolute;left:274px;top:497.8px;" width="14" height="9" viewBox="0 0 14 9" fill="none"><path d="M1.5 7.5 L7 2 L12.5 7.5" stroke="#333" stroke-width="1.5"/></svg>
<svg style="position:absolute;left:19px;top:521.6px;" width="21" height="19" viewBox="0 0 21 19" fill="none"><defs><linearGradient id="qg79" x1="0" y1="0" x2="1" y2="1"><stop offset="0" stop-color="#ffffff"/><stop offset="1" stop-color="#c3d0ee"/></linearGradient></defs>
<rect x="7.5" y="0.7" width="12.5" height="12" fill="url(#qg79)" stroke="#5c6f96" stroke-width="0.9"/><rect x="7.5" y="0.7" width="12.5" height="2.4" fill="#3f8f8c"/>
<path d="M15.5 6 H18.5 M15.5 8.5 H18.5 M15.5 11 H18.5" stroke="#6c7fa8" stroke-width="0.9"/>
<rect x="0.6" y="5.6" width="13" height="12.5" fill="url(#qg79)" stroke="#5c6f96" stroke-width="0.9"/><rect x="0.6" y="5.6" width="13" height="2.4" fill="#4a9996"/>
<path d="M3 11 H5.5 M8 11 H12 M3 13.5 H5.5 M8 13.5 H12 M3 16 H5.5 M8 16 H12" stroke="#6c7fa8" stroke-width="0.9"/></svg>
<div class="t " style="top:520.10px;font-size:16px;line-height:24px;color:#222;left:53.60px;"><span class="k">성적세부정보</span></div>
<div class="t " style="top:546.70px;font-size:16px;line-height:24px;color:#222;font-weight:bold;left:16.40px;"><span class="k">폼</span></div>
<svg style="position:absolute;left:274px;top:551.8px;" width="14" height="9" viewBox="0 0 14 9" fill="none"><path d="M1.5 7.5 L7 2 L12.5 7.5" stroke="#333" stroke-width="1.5"/></svg>
<svg style="position:absolute;left:19px;top:575.9px;" width="20" height="17" viewBox="0 0 20 17" fill="none"><defs><linearGradient id="fg81" x1="0" y1="0" x2="1" y2="1"><stop offset="0.3" stop-color="#ffffff"/><stop offset="1" stop-color="#c5cdf0"/></linearGradient></defs>
<rect x="0.6" y="0.6" width="18.3" height="15.8" fill="url(#fg81)" stroke="#51618a" stroke-width="1"/>
<rect x="0.6" y="0.3" width="18.3" height="2.5" fill="#c2557f"/>
<path d="M3.5 6 H7.5 M3.5 10.5 H7.5" stroke="#5a6c94" stroke-width="1"/>
<rect x="9.6" y="4.7" width="5.3" height="2.4" fill="#dfe5f5" stroke="#5a6c94" stroke-width="0.9"/><rect x="9.6" y="9.3" width="5.3" height="2.4" fill="#dfe5f5" stroke="#5a6c94" stroke-width="0.9"/></svg>
<div class="t " style="top:573.90px;font-size:16px;line-height:24px;color:#222;left:53.60px;"><span class="k">성적입력</span></div>
<svg style="position:absolute;left:19px;top:606.0px;" width="20" height="17" viewBox="0 0 20 17" fill="none"><defs><linearGradient id="fg82" x1="0" y1="0" x2="1" y2="1"><stop offset="0.3" stop-color="#ffffff"/><stop offset="1" stop-color="#c5cdf0"/></linearGradient></defs>
<rect x="0.6" y="0.6" width="18.3" height="15.8" fill="url(#fg82)" stroke="#51618a" stroke-width="1"/>
<rect x="0.6" y="0.3" width="18.3" height="2.5" fill="#c2557f"/>
<path d="M3.5 6 H7.5 M3.5 10.5 H7.5" stroke="#5a6c94" stroke-width="1"/>
<rect x="9.6" y="4.7" width="5.3" height="2.4" fill="#dfe5f5" stroke="#5a6c94" stroke-width="0.9"/><rect x="9.6" y="9.3" width="5.3" height="2.4" fill="#dfe5f5" stroke="#5a6c94" stroke-width="0.9"/></svg>
<div class="t " style="top:604.00px;font-size:16px;line-height:24px;color:#222;left:53.60px;"><span class="k">성적입력세부</span></div>
<div class="t " style="top:630.60px;font-size:16px;line-height:24px;color:#222;font-weight:bold;left:16.40px;"><span class="k">보고서</span></div>
<svg style="position:absolute;left:274px;top:635.6999999999999px;" width="14" height="9" viewBox="0 0 14 9" fill="none"><path d="M1.5 7.5 L7 2 L12.5 7.5" stroke="#333" stroke-width="1.5"/></svg>
<div style="position:absolute;left:5px;top:654px;width:296px;height:30px;background:#fff;border:1px solid #555"></div>
<svg style="position:absolute;left:19px;top:659.8px;" width="18" height="17" viewBox="0 0 18 17" fill="none"><defs><linearGradient id="rg84" x1="0" y1="0" x2="1" y2="1"><stop offset="0" stop-color="#8fca8c"/><stop offset="0.6" stop-color="#5ea362"/><stop offset="1" stop-color="#234f2a"/></linearGradient></defs>
<rect x="2" y="0.5" width="15.2" height="16" fill="url(#rg84)" stroke="#3f7a45" stroke-width="0.8"/>
<rect x="6" y="3" width="8" height="3.6" fill="#a9d6a6" stroke="#6fae72" stroke-width="0.6"/>
<path d="M1.6 0.5 V16.5" stroke="#222" stroke-width="2.4" stroke-dasharray="1.4 1.2"/></svg>
<div class="t " style="top:657.80px;font-size:16px;line-height:24px;color:#222;left:53.60px;"><span class="k">과목별성적표</span></div>
<div class="t " style="top:684.50px;font-size:16px;line-height:24px;color:#222;font-weight:bold;left:16.40px;"><span class="k">매크로</span></div>
<svg style="position:absolute;left:274px;top:689.5999999999999px;" width="14" height="9" viewBox="0 0 14 9" fill="none"><path d="M1.5 7.5 L7 2 L12.5 7.5" stroke="#333" stroke-width="1.5"/></svg>
<svg style="position:absolute;left:19px;top:714.0px;" width="16" height="17" viewBox="0 0 16 17" fill="none"><defs><linearGradient id="mg86" x1="0" y1="0" x2="1" y2="1"><stop offset="0" stop-color="#fdeea0"/><stop offset="0.55" stop-color="#e8c150"/><stop offset="1" stop-color="#b58322"/></linearGradient></defs>
<path d="M2.6 0.8 H13.6 C15.6 0.8 15.6 4.6 13.6 4.6 H12.2 L9.2 12.4 H13.4 C15.4 12.4 15.4 16.2 13.4 16.2 H2.4 C0.4 16.2 0.4 12.4 2.4 12.4 H3.8 L6.8 4.6 H2.6 C0.6 4.6 0.6 0.8 2.6 0.8 Z" fill="url(#mg86)" stroke="#a88432" stroke-width="0.9"/>
<path d="M6.8 4.6 H12.2 M3.8 12.4 H9.2" stroke="#a88432" stroke-width="0.8"/>
<path d="M3 2.2 H12.5" stroke="#fff6c8" stroke-width="0.9"/></svg>
<div class="t " style="top:712.00px;font-size:16px;line-height:24px;color:#222;left:53.60px;"><span class="k">보고서출력</span></div>
<div style="position:absolute;left:306px;top:210px;width:6px;height:770px;background:#c9c9c9"></div>
<div style="position:absolute;left:311.6px;top:210px;width:1px;height:770px;background:#4a4a4a"></div>
<div style="position:absolute;left:312px;top:210px;width:1607px;height:29px;background:#f0f0f0;border-bottom:1px solid #c6c6c6"></div>
<div style="position:absolute;left:312px;top:239px;width:1607px;height:741px;background:#fff"></div>
<div style="position:absolute;left:312px;top:209px;width:173px;height:31px;background:#fff"></div>
<div style="position:absolute;left:485px;top:212px;width:1px;height:27px;background:#c9c9c9"></div>
<div style="position:absolute;left:312.7px;top:208.6px;width:172.3px;height:4.2px;background:#a4262c"></div>
<svg style="position:absolute;left:321px;top:215.7px;" width="18" height="17" viewBox="0 0 18 17" fill="none"><defs><linearGradient id="rg87" x1="0" y1="0" x2="1" y2="1"><stop offset="0" stop-color="#8fca8c"/><stop offset="0.6" stop-color="#5ea362"/><stop offset="1" stop-color="#234f2a"/></linearGradient></defs>
<rect x="2" y="0.5" width="15.2" height="16" fill="url(#rg87)" stroke="#3f7a45" stroke-width="0.8"/>
<rect x="6" y="3" width="8" height="3.6" fill="#a9d6a6" stroke="#6fae72" stroke-width="0.6"/>
<path d="M1.6 0.5 V16.5" stroke="#222" stroke-width="2.4" stroke-dasharray="1.4 1.2"/></svg>
<div class="t " style="top:212.60px;font-size:16px;line-height:24px;color:#222;left:350.40px;"><span class="k">과목별</span> <span class="k">성적표</span></div>
<svg style="position:absolute;left:462px;top:218px;" width="14" height="14" viewBox="0 0 14 14" fill="none"><path d="M2 2 L12 12 M12 2 L2 12" stroke="#333" stroke-width="1.3"/></svg>
<svg style="position:absolute;left:1898px;top:217px;" width="14" height="14" viewBox="0 0 14 14" fill="none"><path d="M1.5 1.5 L12.5 12.5 M12.5 1.5 L1.5 12.5" stroke="#222" stroke-width="1.3"/></svg>
<div style="position:absolute;left:1899px;top:240px;width:20px;height:738.5px;background:#f3f3f3;border-radius:8px 0 0 8px"></div>
<svg style="position:absolute;left:1903px;top:244px;" width="14" height="10" viewBox="0 0 14 10" fill="none"><path d="M7 1.5 L12.2 8 H1.8 Z" fill="#777" stroke="#777" stroke-width="1.4" stroke-linejoin="round"/></svg>
<div style="position:absolute;left:1904px;top:260px;width:11px;height:40px;border-radius:6px;background:#6f6f6f"></div>
<svg style="position:absolute;left:1903px;top:963px;" width="14" height="10" viewBox="0 0 14 10" fill="none"><path d="M7 8.5 L12.2 2 H1.8 Z" fill="#777" stroke="#777" stroke-width="1.4" stroke-linejoin="round"/></svg>
<div style="position:absolute;left:342px;top:268px;width:723px;height:189px;background:#aed1fd"></div>
<div class="t" style="left:391.5px;top:269.5px;width:600px;text-align:center;font-family:'Liberation Serif','Noto Serif CJK KR','Noto Serif CJK SC',serif;font-weight:700;font-size:37px;line-height:50px;color:#566073;word-spacing:8.5px;letter-spacing:0px;white-space:pre" id="rtitle">성 적 표</div>
<div class="t " style="top:331.90px;font-size:18.15px;line-height:24px;color:#111;font-weight:bold;left:366.00px;"><span class="k">과목코드</span>:</div>
<div class="t " style="top:333.20px;font-size:16px;line-height:24px;color:#222;left:-95.50px;width:600px;text-align:right;">301</div>
<div class="t " style="top:331.90px;font-size:18.15px;line-height:24px;color:#111;font-weight:bold;left:526.50px;"><span class="k">과목명</span>:</div>
<div class="t " style="top:331.90px;font-size:18.15px;line-height:24px;color:#222;left:694.00px;"><span class="k">미래와</span> <span class="k">사회</span></div>
<div class="t " style="top:331.90px;font-size:18.15px;line-height:24px;color:#111;font-weight:bold;left:836.00px;"><span class="k">학점수</span>:</div>
<div class="t " style="top:333.20px;font-size:16px;line-height:24px;color:#222;left:667.30px;width:600px;text-align:center;">2</div>
<div class="t " style="top:364.40px;font-size:18.15px;line-height:24px;color:#111;font-weight:bold;left:375.00px;"><span class="k">학년</span>:</div>
<div style="position:absolute;left:418px;top:364.2px;width:50.2px;height:21.8px;background:#fff"></div>
<div class="t " style="top:366.20px;font-size:16px;line-height:24px;color:#222;left:-133.50px;width:600px;text-align:right;">1</div>
<div class="t " style="top:364.40px;font-size:18.15px;line-height:24px;color:#111;font-weight:bold;left:529.00px;"><span class="k">학기</span>:</div>
<div class="t " style="top:366.20px;font-size:16px;line-height:24px;color:#222;left:313.00px;width:600px;text-align:center;">1</div>
<div class="t " style="top:364.40px;font-size:18.15px;line-height:24px;color:#111;font-weight:bold;left:673.70px;"><span class="k">구분</span>:</div>
<div class="t " style="top:364.40px;font-size:18.15px;line-height:24px;color:#222;left:731.80px;"><span class="k">교양</span></div>
<div style="position:absolute;left:829.8px;top:363px;width:14.4px;height:14px;background:#fff;border:1px solid #111;border-right-width:2px;border-bottom-width:2px"></div>
<div class="t " style="top:364.40px;font-size:18.15px;line-height:24px;color:#111;font-weight:bold;left:858.60px;"><span class="k">필수여부</span></div>
<div style="position:absolute;left:341px;top:400.5px;width:357px;height:2px;background:#111"></div>
<div style="position:absolute;left:698px;top:402.4px;width:357px;height:1.7px;background:#111"></div>
<div class="t " style="top:425.70px;font-size:18.15px;line-height:24px;color:#111;font-weight:bold;left:89.00px;width:600px;text-align:center;"><span class="k">학년</span></div>
<div class="t " style="top:425.70px;font-size:18.15px;line-height:24px;color:#111;font-weight:bold;left:144.80px;width:600px;text-align:center;"><span class="k">반</span></div>
<div class="t " style="top:425.70px;font-size:18.15px;line-height:24px;color:#111;font-weight:bold;left:234.60px;width:600px;text-align:center;"><span class="k">학번</span></div>
<div class="t " style="top:425.70px;font-size:18.15px;line-height:24px;color:#111;font-weight:bold;left:348.50px;width:600px;text-align:center;"><span class="k">이름</span></div>
<div class="t " style="top:425.70px;font-size:18.15px;line-height:24px;color:#111;font-weight:bold;left:440.70px;width:600px;text-align:center;"><span class="k">점수</span></div>
<div class="t " style="top:425.70px;font-size:18.15px;line-height:24px;color:#111;font-weight:bold;left:516.00px;width:600px;text-align:center;"><span class="k">학점</span></div>
<div class="t " style="top:425.70px;font-size:18.15px;line-height:24px;color:#111;font-weight:bold;left:643.00px;width:600px;text-align:center;"><span class="k">연락처</span></div>
<div style="position:absolute;left:312px;top:457px;width:1587px;height:522px;overflow:hidden">
<div class="t " style="top:2.70px;font-size:16px;line-height:24px;color:#222;left:-224.00px;width:600px;text-align:center;">2</div>
<div class="t " style="top:2.70px;font-size:16px;line-height:24px;color:#222;left:-167.00px;width:600px;text-align:center;">A</div>
<div class="t " style="top:2.70px;font-size:16px;line-height:24px;color:#222;left:-77.00px;width:600px;text-align:center;">201905001</div>
<div class="t " style="top:2.20px;font-size:18.15px;line-height:24px;color:#222;left:36.00px;width:600px;text-align:center;"><span class="k">강민용</span></div>
<div class="t " style="top:2.70px;font-size:16px;line-height:24px;color:#222;left:128.50px;width:600px;text-align:center;">50</div>
<div class="t " style="top:2.70px;font-size:16px;line-height:24px;color:#222;left:204.00px;width:600px;text-align:center;">F</div>
<div class="t " style="top:2.70px;font-size:16px;line-height:24px;color:#222;left:331.00px;width:600px;text-align:center;">010<span style="margin:0 1.2px">-</span>7190<span style="margin:0 1.2px">-</span>9977</div>
<div class="t " style="top:30.70px;font-size:16px;line-height:24px;color:#222;left:-224.00px;width:600px;text-align:center;">1</div>
<div class="t " style="top:30.70px;font-size:16px;line-height:24px;color:#222;left:-167.00px;width:600px;text-align:center;">A</div>
<div class="t " style="top:30.70px;font-size:16px;line-height:24px;color:#222;left:-77.00px;width:600px;text-align:center;">201905002</div>
<div class="t " style="top:30.20px;font-size:18.15px;line-height:24px;color:#222;left:36.00px;width:600px;text-align:center;"><span class="k">고민종</span></div>
<div class="t " style="top:30.70px;font-size:16px;line-height:24px;color:#222;left:128.50px;width:600px;text-align:center;">0</div>
<div class="t " style="top:30.70px;font-size:16px;line-height:24px;color:#222;left:331.00px;width:600px;text-align:center;">01007847070</div>
<div class="t " style="top:58.70px;font-size:16px;line-height:24px;color:#222;left:-224.00px;width:600px;text-align:center;">1</div>
<div class="t " style="top:58.70px;font-size:16px;line-height:24px;color:#222;left:-167.00px;width:600px;text-align:center;">A</div>
<div class="t " style="top:58.70px;font-size:16px;line-height:24px;color:#222;left:-77.00px;width:600px;text-align:center;">201905010</div>
<div class="t " style="top:58.20px;font-size:18.15px;line-height:24px;color:#222;left:36.00px;width:600px;text-align:center;"><span class="k">문지혁</span></div>
<div class="t " style="top:58.70px;font-size:16px;line-height:24px;color:#222;left:128.50px;width:600px;text-align:center;">0</div>
<div class="t " style="top:58.70px;font-size:16px;line-height:24px;color:#222;left:331.00px;width:600px;text-align:center;">01071290772</div>
<div class="t " style="top:86.70px;font-size:16px;line-height:24px;color:#222;left:-224.00px;width:600px;text-align:center;">1</div>
<div class="t " style="top:86.70px;font-size:16px;line-height:24px;color:#222;left:-167.00px;width:600px;text-align:center;">A</div>
<div class="t " style="top:86.70px;font-size:16px;line-height:24px;color:#222;left:-77.00px;width:600px;text-align:center;">201905012</div>
<div class="t " style="top:86.20px;font-size:18.15px;line-height:24px;color:#222;left:36.00px;width:600px;text-align:center;"><span class="k">백근일</span></div>
<div class="t " style="top:86.70px;font-size:16px;line-height:24px;color:#222;left:128.50px;width:600px;text-align:center;">0</div>
<div class="t " style="top:86.70px;font-size:16px;line-height:24px;color:#222;left:331.00px;width:600px;text-align:center;">01041120220</div>
<div class="t " style="top:114.70px;font-size:16px;line-height:24px;color:#222;left:-224.00px;width:600px;text-align:center;">1</div>
<div class="t " style="top:114.70px;font-size:16px;line-height:24px;color:#222;left:-167.00px;width:600px;text-align:center;">A</div>
<div class="t " style="top:114.70px;font-size:16px;line-height:24px;color:#222;left:-77.00px;width:600px;text-align:center;">201905013</div>
<div class="t " style="top:114.20px;font-size:18.15px;line-height:24px;color:#222;left:36.00px;width:600px;text-align:center;"><span class="k">성시향</span></div>
<div class="t " style="top:114.70px;font-size:16px;line-height:24px;color:#222;left:128.50px;width:600px;text-align:center;">0</div>
<div class="t " style="top:114.70px;font-size:16px;line-height:24px;color:#222;left:331.00px;width:600px;text-align:center;">010<span style="margin:0 1.2px">-</span>7807<span style="margin:0 1.2px">-</span>8792</div>
<div class="t " style="top:142.70px;font-size:16px;line-height:24px;color:#222;left:-224.00px;width:600px;text-align:center;">1</div>
<div class="t " style="top:142.70px;font-size:16px;line-height:24px;color:#222;left:-167.00px;width:600px;text-align:center;">A</div>
<div class="t " style="top:142.70px;font-size:16px;line-height:24px;color:#222;left:-77.00px;width:600px;text-align:center;">201905014</div>
<div class="t " style="top:142.20px;font-size:18.15px;line-height:24px;color:#222;left:36.00px;width:600px;text-align:center;"><span class="k">손태훈</span></div>
<div class="t " style="top:142.70px;font-size:16px;line-height:24px;color:#222;left:128.50px;width:600px;text-align:center;">0</div>
<div class="t " style="top:142.70px;font-size:16px;line-height:24px;color:#222;left:331.00px;width:600px;text-align:center;">010<span style="margin:0 1.2px">-</span>7711<span style="margin:0 1.2px">-</span>7772</div>
<div class="t " style="top:170.70px;font-size:16px;line-height:24px;color:#222;left:-224.00px;width:600px;text-align:center;">1</div>
<div class="t " style="top:170.70px;font-size:16px;line-height:24px;color:#222;left:-167.00px;width:600px;text-align:center;">A</div>
<div class="t " style="top:170.70px;font-size:16px;line-height:24px;color:#222;left:-77.00px;width:600px;text-align:center;">201905015</div>
<div class="t " style="top:170.20px;font-size:18.15px;line-height:24px;color:#222;left:36.00px;width:600px;text-align:center;"><span class="k">유용범</span></div>
<div class="t " style="top:170.70px;font-size:16px;line-height:24px;color:#222;left:128.50px;width:600px;text-align:center;">0</div>
<div class="t " style="top:170.70px;font-size:16px;line-height:24px;color:#222;left:331.00px;width:600px;text-align:center;">010<span style="margin:0 1.2px">-</span>7707<span style="margin:0 1.2px">-</span>7000</div>
<div class="t " style="top:198.70px;font-size:16px;line-height:24px;color:#222;left:-224.00px;width:600px;text-align:center;">1</div>
<div class="t " style="top:198.70px;font-size:16px;line-height:24px;color:#222;left:-167.00px;width:600px;text-align:center;">C</div>
<div class="t " style="top:198.70px;font-size:16px;line-height:24px;color:#222;left:-77.00px;width:600px;text-align:center;">201905016</div>
<div class="t " style="top:198.20px;font-size:18.15px;line-height:24px;color:#222;left:36.00px;width:600px;text-align:center;"><span class="k">연경임</span></div>
<div class="t " style="top:198.70px;font-size:16px;line-height:24px;color:#222;left:128.50px;width:600px;text-align:center;">0</div>
<div class="t " style="top:198.70px;font-size:16px;line-height:24px;color:#222;left:331.00px;width:600px;text-align:center;">010<span style="margin:0 1.2px">-</span>7127<span style="margin:0 1.2px">-</span>7080</div>
<div class="t " style="top:226.70px;font-size:16px;line-height:24px;color:#222;left:-224.00px;width:600px;text-align:center;">1</div>
<div class="t " style="top:226.70px;font-size:16px;line-height:24px;color:#222;left:-167.00px;width:600px;text-align:center;">A</div>
<div class="t " style="top:226.70px;font-size:16px;line-height:24px;color:#222;left:-77.00px;width:600px;text-align:center;">201905017</div>
<div class="t " style="top:226.20px;font-size:18.15px;line-height:24px;color:#222;left:36.00px;width:600px;text-align:center;"><span class="k">연상혁</span></div>
<div class="t " style="top:226.70px;font-size:16px;line-height:24px;color:#222;left:128.50px;width:600px;text-align:center;">0</div>
<div class="t " style="top:226.70px;font-size:16px;line-height:24px;color:#222;left:331.00px;width:600px;text-align:center;">010<span style="margin:0 1.2px">-</span>7770<span style="margin:0 1.2px">-</span>7907</div>
<div class="t " style="top:254.70px;font-size:16px;line-height:24px;color:#222;left:-224.00px;width:600px;text-align:center;">1</div>
<div class="t " style="top:254.70px;font-size:16px;line-height:24px;color:#222;left:-167.00px;width:600px;text-align:center;">A</div>
<div class="t " style="top:254.70px;font-size:16px;line-height:24px;color:#222;left:-77.00px;width:600px;text-align:center;">201905018</div>
<div class="t " style="top:254.20px;font-size:18.15px;line-height:24px;color:#222;left:36.00px;width:600px;text-align:center;"><span class="k">연중현</span></div>
<div class="t " style="top:254.70px;font-size:16px;line-height:24px;color:#222;left:128.50px;width:600px;text-align:center;">0</div>
<div class="t " style="top:254.70px;font-size:16px;line-height:24px;color:#222;left:331.00px;width:600px;text-align:center;">01012221010</div>
<div class="t " style="top:282.70px;font-size:16px;line-height:24px;color:#222;left:-224.00px;width:600px;text-align:center;">1</div>
<div class="t " style="top:282.70px;font-size:16px;line-height:24px;color:#222;left:-167.00px;width:600px;text-align:center;">B</div>
<div class="t " style="top:282.70px;font-size:16px;line-height:24px;color:#222;left:-77.00px;width:600px;text-align:center;">201905063</div>
<div class="t " style="top:282.20px;font-size:18.15px;line-height:24px;color:#222;left:36.00px;width:600px;text-align:center;"><span class="k">송용길</span></div>
<div class="t " style="top:282.70px;font-size:16px;line-height:24px;color:#222;left:128.50px;width:600px;text-align:center;">0</div>
<div class="t " style="top:282.70px;font-size:16px;line-height:24px;color:#222;left:331.00px;width:600px;text-align:center;">01070560777</div>
<div class="t " style="top:310.70px;font-size:16px;line-height:24px;color:#222;left:-224.00px;width:600px;text-align:center;">1</div>
<div class="t " style="top:310.70px;font-size:16px;line-height:24px;color:#222;left:-167.00px;width:600px;text-align:center;">B</div>
<div class="t " style="top:310.70px;font-size:16px;line-height:24px;color:#222;left:-77.00px;width:600px;text-align:center;">201905064</div>
<div class="t " style="top:310.20px;font-size:18.15px;line-height:24px;color:#222;left:36.00px;width:600px;text-align:center;"><span class="k">선동혁</span></div>
<div class="t " style="top:310.70px;font-size:16px;line-height:24px;color:#222;left:128.50px;width:600px;text-align:center;">0</div>
<div class="t " style="top:310.70px;font-size:16px;line-height:24px;color:#222;left:331.00px;width:600px;text-align:center;">01009567207</div>
<div class="t " style="top:338.70px;font-size:16px;line-height:24px;color:#222;left:-224.00px;width:600px;text-align:center;">1</div>
<div class="t " style="top:338.70px;font-size:16px;line-height:24px;color:#222;left:-167.00px;width:600px;text-align:center;">B</div>
<div class="t " style="top:338.70px;font-size:16px;line-height:24px;color:#222;left:-77.00px;width:600px;text-align:center;">201905065</div>
<div class="t " style="top:338.20px;font-size:18.15px;line-height:24px;color:#222;left:36.00px;width:600px;text-align:center;"><span class="k">안애현</span></div>
<div class="t " style="top:338.70px;font-size:16px;line-height:24px;color:#222;left:128.50px;width:600px;text-align:center;">0</div>
<div class="t " style="top:338.70px;font-size:16px;line-height:24px;color:#222;left:331.00px;width:600px;text-align:center;">010<span style="margin:0 1.2px">-</span>7979<span style="margin:0 1.2px">-</span>0727</div>
<div class="t " style="top:366.70px;font-size:16px;line-height:24px;color:#222;left:-224.00px;width:600px;text-align:center;">1</div>
<div class="t " style="top:366.70px;font-size:16px;line-height:24px;color:#222;left:-167.00px;width:600px;text-align:center;">B</div>
<div class="t " style="top:366.70px;font-size:16px;line-height:24px;color:#222;left:-77.00px;width:600px;text-align:center;">201905067</div>
<div class="t " style="top:366.20px;font-size:18.15px;line-height:24px;color:#222;left:36.00px;width:600px;text-align:center;"><span class="k">은동건</span></div>
<div class="t " style="top:366.70px;font-size:16px;line-height:24px;color:#222;left:128.50px;width:600px;text-align:center;">0</div>
<div class="t " style="top:366.70px;font-size:16px;line-height:24px;color:#222;left:331.00px;width:600px;text-align:center;">010<span style="margin:0 1.2px">-</span>7010<span style="margin:0 1.2px">-</span>7900</div>
<div class="t " style="top:394.70px;font-size:16px;line-height:24px;color:#222;left:-224.00px;width:600px;text-align:center;">1</div>
<div class="t " style="top:394.70px;font-size:16px;line-height:24px;color:#222;left:-167.00px;width:600px;text-align:center;">B</div>
<div class="t " style="top:394.70px;font-size:16px;line-height:24px;color:#222;left:-77.00px;width:600px;text-align:center;">201905068</div>
<div class="t " style="top:394.20px;font-size:18.15px;line-height:24px;color:#222;left:36.00px;width:600px;text-align:center;"><span class="k">오연용</span></div>
<div class="t " style="top:394.70px;font-size:16px;line-height:24px;color:#222;left:128.50px;width:600px;text-align:center;">0</div>
<div class="t " style="top:394.70px;font-size:16px;line-height:24px;color:#222;left:331.00px;width:600px;text-align:center;">010<span style="margin:0 1.2px">-</span>7700<span style="margin:0 1.2px">-</span>8007</div>
<div class="t " style="top:422.70px;font-size:16px;line-height:24px;color:#222;left:-224.00px;width:600px;text-align:center;">1</div>
<div class="t " style="top:422.70px;font-size:16px;line-height:24px;color:#222;left:-167.00px;width:600px;text-align:center;">B</div>
<div class="t " style="top:422.70px;font-size:16px;line-height:24px;color:#222;left:-77.00px;width:600px;text-align:center;">201905069</div>
<div class="t " style="top:422.20px;font-size:18.15px;line-height:24px;color:#222;left:36.00px;width:600px;text-align:center;"><span class="k">연혜용</span></div>
<div class="t " style="top:422.70px;font-size:16px;line-height:24px;color:#222;left:128.50px;width:600px;text-align:center;">0</div>
<div class="t " style="top:422.70px;font-size:16px;line-height:24px;color:#222;left:331.00px;width:600px;text-align:center;">010<span style="margin:0 1.2px">-</span>7000<span style="margin:0 1.2px">-</span>9082</div>
<div class="t " style="top:450.70px;font-size:16px;line-height:24px;color:#222;left:-224.00px;width:600px;text-align:center;">1</div>
<div class="t " style="top:450.70px;font-size:16px;line-height:24px;color:#222;left:-167.00px;width:600px;text-align:center;">B</div>
<div class="t " style="top:450.70px;font-size:16px;line-height:24px;color:#222;left:-77.00px;width:600px;text-align:center;">201905070</div>
<div class="t " style="top:450.20px;font-size:18.15px;line-height:24px;color:#222;left:36.00px;width:600px;text-align:center;"><span class="k">연효식</span></div>
<div class="t " style="top:450.70px;font-size:16px;line-height:24px;color:#222;left:128.50px;width:600px;text-align:center;">0</div>
<div class="t " style="top:450.70px;font-size:16px;line-height:24px;color:#222;left:331.00px;width:600px;text-align:center;">01178970280</div>
<div class="t " style="top:478.70px;font-size:16px;line-height:24px;color:#222;left:-224.00px;width:600px;text-align:center;">1</div>
<div class="t " style="top:478.70px;font-size:16px;line-height:24px;color:#222;left:-167.00px;width:600px;text-align:center;">B</div>
<div class="t " style="top:478.70px;font-size:16px;line-height:24px;color:#222;left:-77.00px;width:600px;text-align:center;">201905072</div>
<div class="t " style="top:478.20px;font-size:18.15px;line-height:24px;color:#222;left:36.00px;width:600px;text-align:center;"><span class="k">이용남</span></div>
<div class="t " style="top:478.70px;font-size:16px;line-height:24px;color:#222;left:128.50px;width:600px;text-align:center;">0</div>
<div class="t " style="top:478.70px;font-size:16px;line-height:24px;color:#222;left:331.00px;width:600px;text-align:center;">01001030812</div>
<div class="t " style="top:506.70px;font-size:16px;line-height:24px;color:#222;left:-224.00px;width:600px;text-align:center;">1</div>
<div class="t " style="top:506.70px;font-size:16px;line-height:24px;color:#222;left:-167.00px;width:600px;text-align:center;">B</div>
<div class="t " style="top:506.70px;font-size:16px;line-height:24px;color:#222;left:-77.00px;width:600px;text-align:center;">201905074</div>
<div class="t " style="top:506.20px;font-size:18.15px;line-height:24px;color:#222;left:36.00px;width:600px;text-align:center;"><span class="k">이현수</span></div>
<div class="t " style="top:506.70px;font-size:16px;line-height:24px;color:#222;left:128.50px;width:600px;text-align:center;">0</div>
<div class="t " style="top:506.70px;font-size:16px;line-height:24px;color:#222;left:331.00px;width:600px;text-align:center;">010<span style="margin:0 1.2px">-</span>7000<span style="margin:0 1.2px">-</span>0001</div>
</div>
<div style="position:absolute;left:0;top:980px;width:1919px;height:27px;background:#f5f5f5"></div>
<div style="position:absolute;left:0;top:1005.8px;width:1919px;height:1.2px;background:#b3aaa0"></div>
<div class="t " style="top:981.50px;font-size:16px;line-height:24px;color:#222;left:14.30px;word-spacing:2.5px;"><span class="k">보고서</span> <span class="k">보기</span></div>
<div class="t " style="top:982.20px;font-size:15.3px;line-height:24px;color:#333;left:1626.00px;">Num Lock</div>
<div style="position:absolute;left:1719px;top:980px;width:50px;height:26px;background:#e0e0e0"></div>
<svg style="position:absolute;left:1733px;top:982px;" width="22" height="22" viewBox="0 0 22 22" fill="none"><rect x="3" y="1.2" width="16.5" height="19" stroke="#333" stroke-width="1.3"/><path d="M1.2 5 H4.5 M1.2 10.5 H4.5 M1.2 16 H4.5" stroke="#333" stroke-width="1.2"/><rect x="7.5" y="10" width="3.6" height="7.5" stroke="#333" stroke-width="1.2"/><rect x="13" y="5.5" width="3.6" height="12" stroke="#333" stroke-width="1.2"/></svg>
<svg style="position:absolute;left:1785px;top:982px;" width="21" height="22" viewBox="0 0 21 22" fill="none"><path d="M6 20 H1.8 V1.2 H10 L15 6.2 V10" stroke="#333" stroke-width="1.3"/><path d="M10 1.2 V6.2 H15" stroke="#333" stroke-width="1.1"/><path d="M9 14.5 V11 H16 V14.5 M7 18.5 V14.5 H18 V18.5 Z M9.5 17.5 H15.5 V20.3 H9.5 Z" stroke="#333" stroke-width="1.2" fill="#f5f5f5"/></svg>
<svg style="position:absolute;left:1833px;top:982px;" width="22" height="22" viewBox="0 0 22 22" fill="none"><rect x="1.3" y="1.3" width="19" height="19" stroke="#333" stroke-width="1.3"/><path d="M1.3 10.8 H20.3 M8 1.3 V20.3" stroke="#333" stroke-width="1.2"/><path d="M3 6 H6 M3 15.5 H6" stroke="#333" stroke-width="1"/><rect x="11" y="4.5" width="6.5" height="2.8" stroke="#333" stroke-width="1"/><rect x="11" y="14" width="6.5" height="2.8" stroke="#333" stroke-width="1"/></svg>
<svg style="position:absolute;left:1883px;top:982px;" width="22" height="22" viewBox="0 0 22 22" fill="none"><path d="M1.5 1.5 L20 20 H1.5 Z" stroke="#333" stroke-width="1.3" stroke-linejoin="round"/><path d="M5.5 11.5 L10.5 16.5 H5.5 Z" stroke="#333" stroke-width="1.1" stroke-linejoin="round"/><path d="M14.5 1.5 H20.5 V19 M17 4.5 H20 M17 7.5 H20 M17 10.5 H20 M17 13.5 H20 M14.5 1.5 V14" stroke="#333" stroke-width="1.1"/></svg>
</body></html>
